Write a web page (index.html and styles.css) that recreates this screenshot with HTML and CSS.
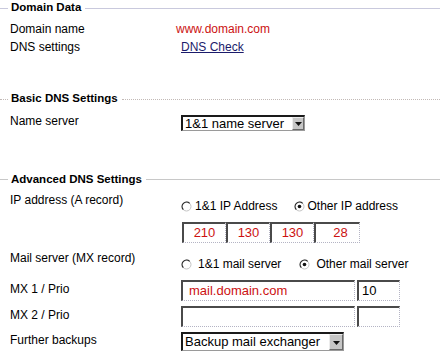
FILE: index.html
```html
<!DOCTYPE html>
<html>
<head>
<meta charset="utf-8">
<link rel="stylesheet" href="styles.css">
</head>
<body>
<div class="form">
  <div class="sec sec-1"><span class="ln ln-start"></span><span class="sec-title">Domain Data</span><span class="ln"></span></div>
  <div class="row r-domain"><div class="label">Domain name</div><div class="val red domain">www.domain.com</div></div>
  <div class="row r-dns"><div class="label">DNS settings</div><div class="val"><a class="link" href="#">DNS Check</a></div></div>

  <div class="sec sec-2"><span class="ln ln-start"></span><span class="sec-title">Basic DNS Settings</span><span class="ln"></span></div>
  <div class="row r-ns">
    <div class="label">Name server</div>
    <div class="val">
      <div class="select sel-ns"><span class="sel-text">1&amp;1 name server</span><span class="sel-btn"><svg width="7" height="5" viewBox="0 0 7 5"><path d="M0 1h7L3.5 5z" fill="#111"/></svg></span></div>
    </div>
  </div>

  <div class="sec sec-3"><span class="ln ln-start"></span><span class="sec-title">Advanced DNS Settings</span><span class="ln"></span></div>
  <div class="row r-ip">
    <div class="label">IP address (A record)</div>
    <div class="val">
      <div class="radios radios-ip">
        <span class="opt"><svg class="radio" width="11" height="11" viewBox="0 0 11 11"><circle cx="5.5" cy="5.5" r="4.5" fill="#fff" stroke="#c4c4c4"/><path d="M2.32 8.68A4.5 4.5 0 0 1 8.68 2.32" fill="none" stroke="#2a2a2a" stroke-width="1.2"/></svg><span>1&amp;1 IP Address</span></span>
        <span class="opt"><svg class="radio" width="11" height="11" viewBox="0 0 11 11"><circle cx="5.5" cy="5.5" r="4.5" fill="#fff" stroke="#c4c4c4"/><path d="M2.32 8.68A4.5 4.5 0 0 1 8.68 2.32" fill="none" stroke="#2a2a2a" stroke-width="1.2"/><circle cx="5.5" cy="5.5" r="1.8" fill="#111"/></svg><span>Other IP address</span></span>
      </div>
      <div class="ipboxes">
        <div class="inp ip">210</div>
        <div class="inp ip">130</div>
        <div class="inp ip">130</div>
        <div class="inp ip ip-last">28</div>
      </div>
    </div>
  </div>

  <div class="row r-mail">
    <div class="label">Mail server (MX record)</div>
    <div class="val">
      <div class="radios radios-mail">
        <span class="opt"><svg class="radio" width="11" height="11" viewBox="0 0 11 11"><circle cx="5.5" cy="5.5" r="4.5" fill="#fff" stroke="#c4c4c4"/><path d="M2.32 8.68A4.5 4.5 0 0 1 8.68 2.32" fill="none" stroke="#2a2a2a" stroke-width="1.2"/></svg><span>1&amp;1 mail server</span></span>
        <span class="opt"><svg class="radio" width="11" height="11" viewBox="0 0 11 11"><circle cx="5.5" cy="5.5" r="4.5" fill="#fff" stroke="#c4c4c4"/><path d="M2.32 8.68A4.5 4.5 0 0 1 8.68 2.32" fill="none" stroke="#2a2a2a" stroke-width="1.2"/><circle cx="5.5" cy="5.5" r="1.8" fill="#111"/></svg><span>Other mail server</span></span>
      </div>
    </div>
  </div>

  <div class="row r-mx1">
    <div class="label">MX 1 / Prio</div>
    <div class="val mxpair">
      <div class="inp mx">mail.domain.com</div>
      <div class="inp prio">10</div>
    </div>
  </div>
  <div class="row r-mx2">
    <div class="label">MX 2 / Prio</div>
    <div class="val mxpair">
      <div class="inp mx"></div>
      <div class="inp prio"></div>
    </div>
  </div>
  <div class="row r-backup">
    <div class="label">Further backups</div>
    <div class="val">
      <div class="select sel-backup"><span class="sel-text">Backup mail exchanger</span><span class="sel-btn"><svg width="7" height="5" viewBox="0 0 7 5"><path d="M0 1h7L3.5 5z" fill="#111"/></svg></span></div>
    </div>
  </div>
</div>
</body>
</html>
```
FILE: styles.css
```css
html, body {
  margin: 0;
  padding: 0;
  background: #fff;
}
body {
  font-family: "Liberation Sans", Arial, sans-serif;
  font-size: 12px;
  line-height: 14px;
  color: #000;
  width: 440px;
  height: 364px;
  overflow: hidden;
}
.form {
  display: flex;
  flex-direction: column;
}

/* section headings */
.sec {
  display: flex;
  height: 14px;
  line-height: 14px;
}
.sec-title {
  font-weight: bold;
  font-size: 11.5px;
  padding: 0 4px 0 3px;
  white-space: nowrap;
}
.ln {
  flex: 1;
  height: 0;
  margin-top: 8px;
  border-top: 1px solid #c9c9dd;
}
.ln-start {
  flex: 0 0 8px;
}
.sec-2 .ln {
  border-top: 1px dotted #c2b9b6;
}
.sec-3 .ln {
  border-top: 1px solid #c8c8c8;
  margin-top: 7px;
}
.sec-1 { margin-top: 0; }
.sec-2 { margin-top: 37px; }
.sec-3 { margin-top: 41px; }

/* rows */
.row {
  display: flex;
  padding-left: 10px;
  align-items: flex-start;
}
.label {
  flex: 0 0 171px;
  white-space: nowrap;
}
.val {
  display: flex;
  flex-direction: column;
  align-items: flex-start;
}
.r-domain { margin-top: 8px; }
.r-dns { margin-top: 4px; }
.r-ns { margin-top: 9px; }
.r-ip { margin-top: 7px; }
.r-mail { margin-top: 8px; }
.r-mx1 { margin-top: 9px; }
.r-mx2 { margin-top: 5px; }
.r-backup { margin-top: 5px; }

.r-mx1 .label, .r-mx2 .label { padding-top: 2px; }
.r-backup .label { margin-top: 1px; }

.red { color: #cc1111; }
.domain { margin-left: -5px; }
.link {
  color: #1b1b6b;
  text-decoration: underline;
}

/* selects */
.select {
  display: flex;
  box-sizing: border-box;
  background: #fff;
  border-style: solid;
  border-width: 2px 1px 1px 2px;
  border-color: #1a1a1a #9a9a9a #9a9a9a #1a1a1a;
  font-size: 13px;
  color: #000;
}
.sel-ns {
  width: 124px;
  height: 16px;
  margin-top: 1px;
  line-height: 13px;
}
.sel-backup {
  width: 163px;
  height: 19px;
  line-height: 16px;
}
.sel-text {
  flex: 1;
  padding-left: 2px;
  white-space: nowrap;
}
.sel-btn {
  flex: 0 0 12px;
  box-sizing: border-box;
  background: #c6c6c6;
  border-style: solid;
  border-width: 1px;
  border-color: #ececec #6a6a6a #6a6a6a #ececec;
  display: flex;
  align-items: center;
  justify-content: center;
}
.sel-backup .sel-btn { flex-basis: 14px; }

/* radios */
.radios {
  display: flex;
  margin-top: 6px;
  white-space: nowrap;
}
.opt {
  display: flex;
  align-items: center;
}
.radio {
  display: block;
  flex: 0 0 11px;
}
.radios-ip .opt .radio { margin-right: 3px; }
.radios-ip .opt + .opt { margin-left: 16px; }
.radios-mail .opt .radio { margin-right: 6px; }
.radios-mail .opt + .opt { margin-left: 18px; }

/* inputs */
.inp {
  box-sizing: border-box;
  height: 21px;
  border-style: solid dotted dotted solid;
  border-width: 2px 1px 1px 2px;
  border-color: #4a4a4a #b4b4c4 #b4b4c4 #4a4a4a;
  font-size: 13px;
  line-height: 17px;
  color: #cc1111;
  background: #fff;
  white-space: nowrap;
}
.ipboxes {
  display: flex;
  margin-top: 9px;
  margin-left: 1px;
}
.ip {
  width: 44px;
  text-align: center;
}
.ip-last { width: 46px; padding-left: 6px; }
.mxpair {
  flex-direction: row;
  gap: 2px;
}
.mx {
  width: 174px;
  padding-left: 6px;
}
.prio {
  width: 43px;
  padding-left: 3px;
  color: #000;
}
```
